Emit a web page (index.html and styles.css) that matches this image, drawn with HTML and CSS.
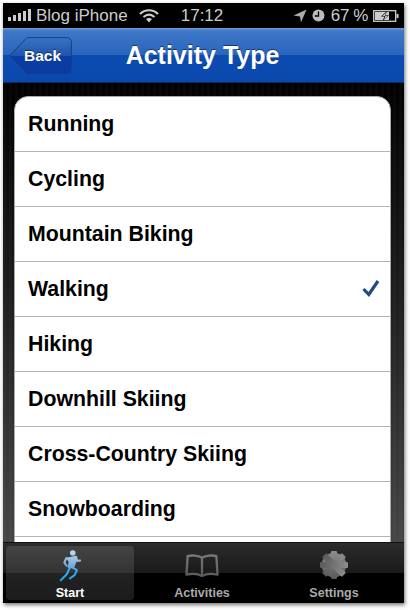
FILE: index.html
```html
<!DOCTYPE html>
<html lang="en">
<head>
<meta charset="utf-8">
<title>Activity Type</title>
<link rel="stylesheet" href="styles.css">
</head>
<body>
<div class="phone">
  <div class="status">
    <div class="status-side">
      <svg class="signal" width="26" height="13" viewBox="0 0 26 13"><rect x="1" y="8" width="3" height="4" fill="#ccc"/><rect x="6" y="6" width="3" height="6" fill="#ccc"/><rect x="11" y="4" width="3" height="8" fill="#ccc"/><rect x="16" y="2" width="3" height="10" fill="#ccc"/><rect x="21" y="0" width="3" height="12" fill="#ccc"/></svg>
      <span class="carrier">Blog iPhone</span>
      <svg class="wifi" width="20" height="14" viewBox="0 0 20 14"><path d="M1 5 C6 0 14 0 19 5" fill="none" stroke="#ccc" stroke-width="2.2"/><path d="M4.5 8 C8 5 12 5 15.5 8" fill="none" stroke="#ccc" stroke-width="2.2"/><path d="M10 13.5 L7 10 C9 8.8 11 8.8 13 10 Z" fill="#ccc"/></svg>
    </div>
    <span class="time">17:12</span>
    <div class="status-side right">
      <svg width="14" height="14" viewBox="0 0 14 14"><path d="M13.5 0.5 L0.5 6.5 L7 7.5 L8 13.5 Z" fill="#aaa"/></svg>
      <svg class="alarm" width="13" height="13" viewBox="0 0 13 13"><circle cx="6.5" cy="6.5" r="6" fill="#bbb"/><path d="M6.5 2.5 V7 H2.8" fill="none" stroke="#000" stroke-width="1.3"/></svg>
      <span class="pct">67 %</span>
      <svg width="26" height="12" viewBox="0 0 26 12"><rect x="0.7" y="0.7" width="22" height="10.6" fill="none" stroke="#ccc" stroke-width="1.3"/><rect x="2" y="2" width="14" height="8" fill="#ccc"/><rect x="23.5" y="4" width="2" height="4" fill="#ccc"/><path d="M14 1 L8 6.5 H11.5 L9.5 11 L16 5.2 H12.5 Z" fill="#000"/><path d="M13.3 2.2 L9.4 6 H12.4 L11 9.6 L15 5.7 H11.9 Z" fill="#ccc"/></svg>
    </div>
  </div>
  <header class="navbar">
    <button class="back" type="button">
      <svg class="back-shape" width="63" height="37" viewBox="0 0 63 37"><defs><linearGradient id="bk" x1="0" y1="0" x2="0" y2="1"><stop offset="0" stop-color="#3a73c4"/><stop offset=".5" stop-color="#1f55ad"/><stop offset=".5" stop-color="#0a3ea5"/><stop offset="1" stop-color="#0a3ba0"/></linearGradient></defs><path d="M0.8 18.5 L17 1.6 Q18 0.6 20 0.6 H57 Q62.4 0.6 62.4 6 V31 Q62.4 36.4 57 36.4 H20 Q18 36.4 17 35.4 Z" fill="url(#bk)" stroke="#17407f"/></svg>
      <span class="back-label">Back</span>
    </button>
    <h1 class="title">Activity Type</h1>
  </header>
  <main class="content">
    <ul class="list">
      <li class="row">Running</li>
      <li class="row">Cycling</li>
      <li class="row">Mountain Biking</li>
      <li class="row">Walking<svg class="check" width="18" height="18" viewBox="0 0 18 18"><path d="M1.5 10 L6.8 15.5 L16 2" fill="none" stroke="#1f4a8c" stroke-width="3.2"/></svg></li>
      <li class="row">Hiking</li>
      <li class="row">Downhill Skiing</li>
      <li class="row">Cross-Country Skiing</li>
      <li class="row">Snowboarding</li>
      <li class="row"></li>
    </ul>
  </main>
  <nav class="tabbar">
    <div class="tab active">
      <div class="icon-box">
        <svg width="24" height="35" viewBox="0 0 26 36"><defs><linearGradient id="run" gradientUnits="userSpaceOnUse" x1="0" y1="2" x2="0" y2="35"><stop offset="0" stop-color="#c8d8e8"/><stop offset=".45" stop-color="#7fb0de"/><stop offset=".65" stop-color="#3fa6ee"/><stop offset="1" stop-color="#1aa8f8"/></linearGradient></defs><circle cx="16" cy="4.5" r="3" fill="url(#run)"/><path d="M8.5 9.5 L19.5 7.5 L20.5 12.5 L17 21.5 L10.5 20.5 L11.5 14 Z" fill="url(#run)"/><g fill="none" stroke="url(#run)" stroke-width="2.2" stroke-linejoin="round" stroke-linecap="round"><path d="M9 10 L6.8 15 L9.5 18.5"/><path d="M19.5 8.5 L21 13 L24 12.5"/><path d="M13 20 L9.5 27.5 L3 34"/><path d="M15.5 20 L20.5 23 L18 28.5 L13 32"/></g></svg>
      </div>
      <span class="tab-label">Start</span>
    </div>
    <div class="tab">
      <div class="icon-box">
        <svg width="36" height="23" viewBox="0 0 36 24"><defs><linearGradient id="bookg" gradientUnits="userSpaceOnUse" x1="0" y1="0" x2="0" y2="24"><stop offset="0" stop-color="#7a7a7a"/><stop offset="1" stop-color="#5a5a5a"/></linearGradient></defs><path d="M18 4 C14 1.5 7 1 3 2.2 L1.8 21.5 C7 20.5 14 20.5 18 23 C22 20.5 29 20.5 34.2 21.5 L33 2.2 C29 1 22 1.5 18 4 Z M18 4 V23" fill="none" stroke="url(#bookg)" stroke-width="2.4" stroke-linejoin="round"/></svg>
      </div>
      <span class="tab-label">Activities</span>
    </div>
    <div class="tab">
      <div class="icon-box">
        <svg width="30" height="30" viewBox="0 0 30 30"><defs><linearGradient id="gear" gradientUnits="userSpaceOnUse" x1="0" y1="0" x2="0" y2="30"><stop offset="0" stop-color="#8e8e8e"/><stop offset="1" stop-color="#595959"/></linearGradient></defs><g fill="url(#gear)"><circle cx="15" cy="15" r="12.3"/><rect x="12" y="1" width="6" height="28" rx="1"/><rect x="12" y="1" width="6" height="28" rx="1" transform="rotate(45 15 15)"/><rect x="12" y="1" width="6" height="28" rx="1" transform="rotate(90 15 15)"/><rect x="12" y="1" width="6" height="28" rx="1" transform="rotate(135 15 15)"/></g></svg>
      </div>
      <span class="tab-label">Settings</span>
    </div>
  </nav>
</div>
</body>
</html>
```
FILE: styles.css
```css
* { box-sizing: border-box; margin: 0; padding: 0; }
html, body { width: 410px; height: 610px; overflow: hidden; background: #fff; }
body { padding: 3px 6px 7px 3px; font-family: "Liberation Sans", Arial, sans-serif; }
.phone { width: 401px; height: 600px; display: flex; flex-direction: column; background: #000; overflow: hidden; box-shadow: 1px 2px 4px rgba(0,0,0,.55); }
.status { height: 25px; flex: none; background: #000; color: #ccc; display: grid; grid-template-columns: 1fr auto 1fr; align-items: center; font-size: 17px; padding: 0 5px 0 2px; }
.status-side { display: flex; align-items: center; gap: 3px; }
.status-side.right { justify-content: flex-end; gap: 5px; }
.signal { margin-left: 2px; }
.wifi { margin-left: 8px; }
.time { font-size: 17px; }
.pct { margin-left: 1px; letter-spacing: -0.4px; }
.navbar { height: 55px; flex: none; position: relative; display: flex; align-items: center; justify-content: center; padding-right: 2px; background: linear-gradient(#6d9bd8 0, #3f77c6 3px, #2a65bd 50%, #0c4cb0 50%, #0a48ae 100%); border-bottom: 1px solid #0b2a66; }
.back { position: absolute; left: 6px; top: 9px; width: 63px; height: 37px; border: 0; background: none; color: #fff; font: inherit; }
.back-shape { display: block; }
.back-label { position: absolute; left: 10px; top: 0; width: 47px; height: 37px; display: flex; align-items: center; justify-content: center; font-size: 15.5px; font-weight: 700; text-shadow: 0 -1px 0 rgba(0,0,0,.5); }
.title { color: #fff; font-size: 25px; font-weight: 700; text-shadow: 0 -1px 0 rgba(0,0,0,.5); }
.content { flex: 1; min-height: 0; overflow: hidden; padding: 13px 13px 0 11px; background: repeating-linear-gradient(90deg, rgba(255,255,255,.025) 0 3px, rgba(255,255,255,0) 3px 6px), linear-gradient(#000 0, #1c1c1c 45%, #454545 100%); }
.list { list-style: none; background: #fff; border: 1px solid #a9a9a9; border-radius: 14px 14px 0 0; overflow: hidden; height: 470px; }
.row { height: 55px; display: flex; align-items: center; justify-content: space-between; padding: 0 10px 0 13px; border-bottom: 1px solid #b4b4b4; font-size: 21.3px; font-weight: 700; color: #000; }
.check { flex: none; margin-bottom: 2px; }
.tabbar { height: 61px; flex: none; display: grid; grid-template-columns: repeat(3, 1fr); gap: 4px; padding: 3px 6px 3px 3px; background: linear-gradient(#2c2c2c 0, #1a1a1a 50%, #000 50%); border-top: 1px solid #111; }
.tab { border-radius: 4px; display: flex; flex-direction: column; align-items: center; padding-top: 1px; color: #aaa; font-size: 12.5px; font-weight: 700; }
.tab.active { color: #fff; background: linear-gradient(#444 0, #333 50%, #222 50%, #1c1c1c 100%); }
.icon-box { height: 36px; flex: none; display: flex; align-items: center; justify-content: center; }
.tab-label { margin-top: 4px; line-height: 13px; }
```
